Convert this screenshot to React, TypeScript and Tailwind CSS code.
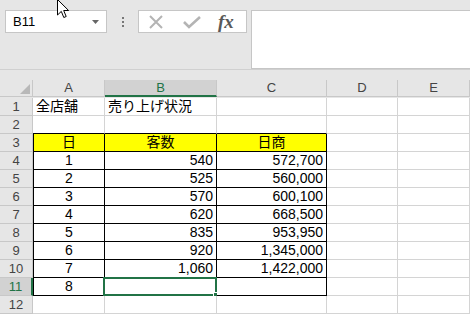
import React from "react";

const cols = ["A", "B", "C", "D", "E"];

type Cell = { text?: string; align?: "left" | "center" | "right" };

const data: Cell[][] = [
  [{ text: "全店舗", align: "left" }, { text: "売り上げ状況", align: "left" }, {}, {}, {}],
  [{}, {}, {}, {}, {}],
  [
    { text: "日", align: "center" },
    { text: "客数", align: "center" },
    { text: "日商", align: "center" },
    {},
    {},
  ],
  ...[
    ["1", "540", "572,700"],
    ["2", "525", "560,000"],
    ["3", "570", "600,100"],
    ["4", "620", "668,500"],
    ["5", "835", "953,950"],
    ["6", "920", "1,345,000"],
    ["7", "1,060", "1,422,000"],
    ["8", "", ""],
  ].map((r) => [
    { text: r[0], align: "center" as const },
    { text: r[1], align: "right" as const },
    { text: r[2], align: "right" as const },
    {},
    {},
  ]),
  [{}, {}, {}, {}, {}],
];

const cellFont = {
  fontFamily: '"Liberation Sans", "Noto Sans CJK JP", sans-serif',
};

const App: React.FC = () => {
  return (
    <div className="relative w-[470px] h-[314px] overflow-hidden bg-[#e6e6e6]">
      {/* formula bar */}
      <div className="flex h-[70px] pt-[10px] pl-[5px] border-b border-[#d0d0d0]">
        <div className="flex items-center justify-between w-[102px] h-[23px] bg-white border border-[#c6c6c6] pl-[7px] pr-[7px]">
          <span
            className="text-[13px] text-black"
            style={{ fontFamily: '"Liberation Sans", Arial, sans-serif' }}
          >
            B11
          </span>
          <svg width="7" height="4" viewBox="0 0 7 4">
            <path d="M0 0 L7 0 L3.5 4 Z" fill="#666" />
          </svg>
        </div>
        <div className="flex flex-col items-center justify-center gap-[2px] w-[31px] h-[23px]">
          <div className="w-[2px] h-[2px] bg-[#777]" />
          <div className="w-[2px] h-[2px] bg-[#777]" />
          <div className="w-[2px] h-[2px] bg-[#777]" />
        </div>
        <div className="flex items-center w-[109px] h-[23px] bg-white border border-[#c6c6c6]">
          <svg width="16" height="16" viewBox="0 0 16 16" className="ml-[9px]">
            <path d="M2 2 L14 14 M14 2 L2 14" stroke="#b4b4b4" strokeWidth="2" />
          </svg>
          <svg width="18" height="14" viewBox="0 0 18 14" className="ml-[19px]">
            <path d="M1 7 L6 12 L17 2" stroke="#b4b4b4" strokeWidth="2.6" fill="none" />
          </svg>
          <span
            className="ml-[17px] text-[19px] leading-none italic font-bold text-[#595959]"
            style={{ fontFamily: '"Liberation Serif", "Times New Roman", serif' }}
          >
            fx
          </span>
        </div>
        <div className="ml-[4px] flex-1 h-[59px] bg-white border border-[#c6c6c6] -mr-px" />
      </div>

      {/* sheet */}
      <div className="mt-[10px] grid grid-cols-[33px_72px_112px_110px_71px_1fr] auto-rows-[18px]">
        {/* column headers */}
        <div className="h-[17px] flex items-end justify-end pr-[2px] pb-[2px] border-r border-b border-[#c8c8c8]">
          <svg width="10" height="10" viewBox="0 0 10 10">
            <path d="M10 0 L10 10 L0 10 Z" fill="#b8b8b8" />
          </svg>
        </div>
        {cols.map((c) => (
          <div
            key={c}
            className={
              c === "B"
                ? "h-[17px] flex items-center justify-center bg-[#d2d2d2] text-[#217346] border-r border-[#c8c8c8] border-b-2 border-b-[#217346] text-[13px]"
                : "h-[17px] flex items-center justify-center text-[#444] border-r border-b border-[#c8c8c8] text-[13px]"
            }
            style={{ fontFamily: '"Liberation Sans", Arial, sans-serif' }}
          >
            {c}
          </div>
        ))}

        {data.map((row, ri) => {
          const r = ri + 1;
          const sel = r === 11;
          return (
            <React.Fragment key={r}>
              <div
                className={
                  sel
                    ? "flex items-center justify-center bg-[#d2d2d2] text-[#217346] border-b border-[#c8c8c8] border-r-2 border-r-[#217346] text-[13px]"
                    : "flex items-center justify-center text-[#444] border-r border-b border-[#c8c8c8] text-[13px]"
                }
                style={{ fontFamily: '"Liberation Sans", Arial, sans-serif' }}
              >
                {r}
              </div>
              {row.map((cell, ci) => {
                const inTable = r >= 3 && r <= 11 && ci <= 2;
                const aboveTable = r === 2 && ci <= 2;
                let cls =
                  "relative flex items-end px-[3px] pb-[1px] text-[14px] leading-[16px] text-black border-r border-b";
                if (inTable) cls += " border-black";
                else if (aboveTable) cls += " border-r-[#d4d4d4] border-b-black";
                else cls += " border-[#d4d4d4]";
                if (inTable && ci === 0) cls += " border-l border-l-black";
                if (r === 3 && ci <= 2) cls += " bg-[#ffff00]";
                else cls += " bg-white";
                if (cell.align === "center") cls += " justify-center";
                else if (cell.align === "right") cls += " justify-end";
                else cls += " justify-start";
                return (
                  <div key={ci} className={cls} style={cellFont}>
                    {cell.text && (
                      <span className="whitespace-nowrap">{cell.text}</span>
                    )}
                    {sel && ci === 1 && (
                      <div className="absolute -left-[2px] -top-[1px] -right-[1px] -bottom-[1px] border-2 border-[#217346]">
                        <div className="absolute -right-[4px] -bottom-[4px] w-[6px] h-[6px] bg-[#217346] border border-white" />
                      </div>
                    )}
                  </div>
                );
              })}
            </React.Fragment>
          );
        })}
      </div>

      {/* mouse cursor */}
      <svg
        className="absolute left-[57px] -top-[1px]"
        width="13"
        height="20"
        viewBox="0 0 13 20"
      >
        <path
          d="M0.5 0.5 L0.5 16 L4.3 12.4 L6.8 18.5 L9.2 17.5 L6.7 11.5 L11.6 11.5 Z"
          fill="white"
          stroke="black"
          strokeWidth="1"
          strokeLinejoin="round"
        />
      </svg>
    </div>
  );
};

export default App;
